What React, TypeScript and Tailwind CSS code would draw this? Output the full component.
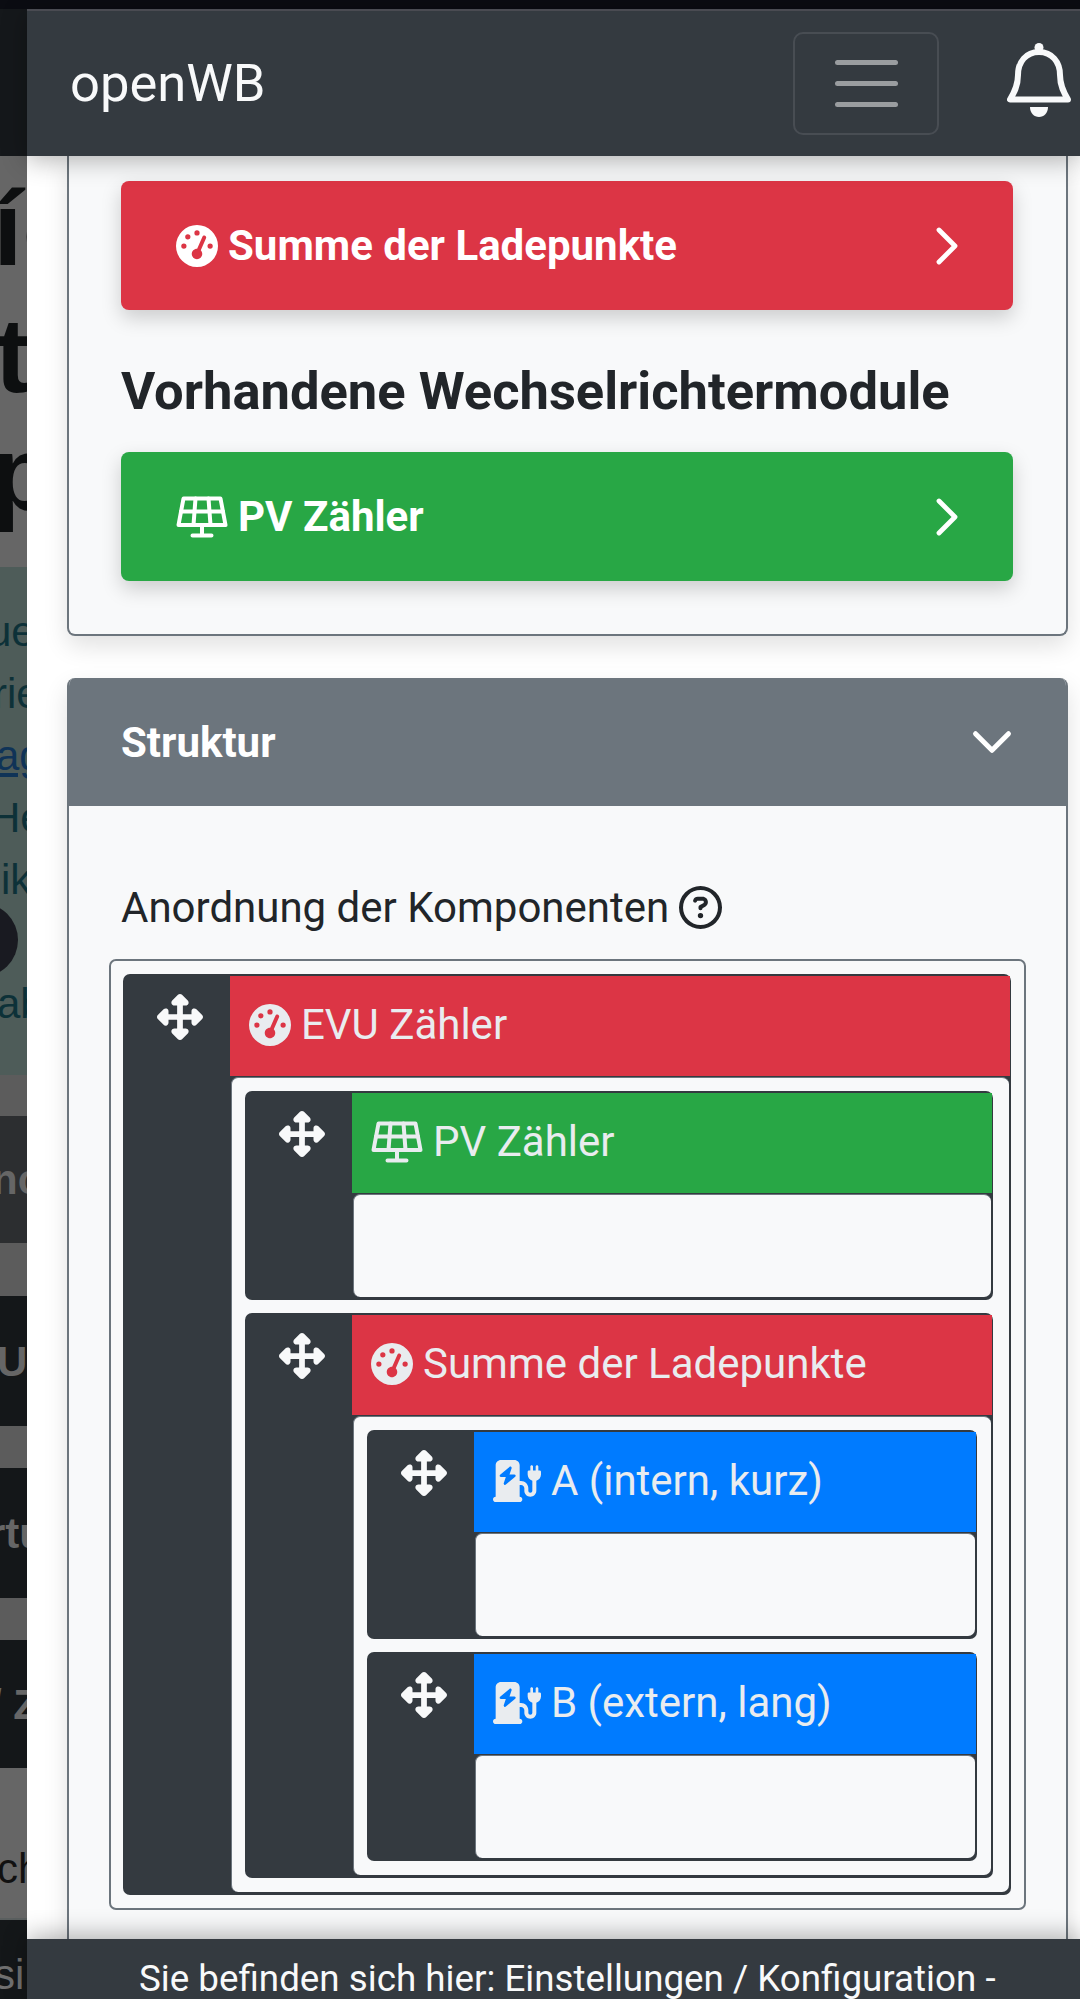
import type { ReactNode } from "react";
import { ChevronDown, ChevronRight } from "lucide-react";
import { FaChargingStation, FaGaugeHigh, FaRegCircleQuestion, FaUpDownLeftRight } from "react-icons/fa6";

function SolarPanel({ className }: { className?: string }) {
  return (
    <svg viewBox="0 0 51 42" className={className} fill="none" stroke="currentColor" strokeWidth="4" strokeLinejoin="round" strokeLinecap="round">
      <path d="M7 2.5H44L49 29H2Z" />
      <path d="M4.5 15.5H46.5M19 2.5L17 29M32 2.5L34 29M25.5 29V38M16 39.5H35" />
    </svg>
  );
}

function BellOutline({ className }: { className?: string }) {
  return (
    <svg viewBox="0 0 65 74" className={className}>
      <circle cx="32" cy="4.5" r="4.5" fill="currentColor" />
      <path
        d="M32 9C19 9 11 19 11 32C11 43 7 50 3 56.5H61C57 50 53 43 53 32C53 19 45 9 32 9Z"
        fill="none"
        stroke="currentColor"
        strokeWidth="6"
        strokeLinejoin="round"
      />
      <path d="M23 64H41C41 70 37 74 32 74C27 74 23 70 23 64Z" fill="currentColor" />
    </svg>
  );
}

type Node = {
  label: string;
  icon: ReactNode;
  head: string;
  items?: Node[];
};

const gauge = <FaGaugeHigh className="w-[42px] h-[42px] shrink-0" />;
const solar = <SolarPanel className="w-[52px] h-[42px] shrink-0" />;
const station = <FaChargingStation preserveAspectRatio="none" className="w-[48px] h-[42px] shrink-0" />;

const tree: Node = {
  label: "EVU Zähler",
  icon: gauge,
  head: "bg-[#dc3545]",
  items: [
    { label: "PV Zähler", icon: solar, head: "bg-[#28a745]" },
    {
      label: "Summe der Ladepunkte",
      icon: gauge,
      head: "bg-[#dc3545]",
      items: [
        { label: "A (intern, kurz)", icon: station, head: "bg-[#007bff]" },
        { label: "B (extern, lang)", icon: station, head: "bg-[#007bff]" },
      ],
    },
  ],
};

function TreeItem({ node, outer }: { node: Node; outer?: boolean }) {
  return (
    <div className="flex rounded-[7px] bg-[#343a40] pt-[2px] pb-[3px] pr-[1px]">
      {/* Drag handle */}
      <div className="w-[107px] shrink-0 pt-[18px] pl-[34px] text-[#f8f9fa]">
        <FaUpDownLeftRight className="w-[46px] h-[46px]" />
      </div>
      <div className="flex-1 min-w-0 flex flex-col">
        <div className={`h-[100px] flex items-center gap-[10px] pl-[19px] pb-[3px] text-[42px] text-[#e9ecef] ${node.head}`}>
          {node.icon}
          <span>{node.label}</span>
        </div>
        <div
          className={`ml-[1px] mr-[1px] mt-[1px] rounded-[7px] border border-[#6c757d] border-r-0 border-b-0 bg-[#f8f9fa] flex flex-col gap-[13px] ${
            node.items ? `pt-[13px] pb-[14px] pl-[13px] ${outer ? "pr-[16px]" : "pr-[14px]"}` : "h-[103px]"
          }`}
        >
          {node.items?.map((item) => (
            <TreeItem key={item.label} node={item} />
          ))}
        </div>
      </div>
    </div>
  );
}

function ModuleButton({ color, icon, label }: { color: string; icon: ReactNode; label: string }) {
  return (
    <button className={`w-full h-[129px] rounded-[8px] flex items-center justify-between pl-[55px] pr-[34px] text-white font-bold text-[42px] shadow-[0_8px_20px_rgba(0,0,0,0.18)] ${color}`}>
      <span className="flex items-center gap-[10px]">
        {icon}
        {label}
      </span>
      <ChevronRight className="w-[64px] h-[64px]" strokeWidth={1.8} />
    </button>
  );
}

// dimmed page behind the drawer, only its right edge is visible
function PeekBand({ className, children }: { className: string; children?: ReactNode }) {
  return <div className={`overflow-hidden flex whitespace-nowrap ${className}`}>{children}</div>;
}

function PeekStrip() {
  const tealRow = "h-[62px] flex items-center text-[42px] text-[#0d3138] whitespace-nowrap";
  return (
    <div className="w-[27px] shrink-0 flex flex-col overflow-hidden font-['Liberation_Sans',sans-serif]">
      <PeekBand className="h-[147px] bg-[#15181b]" />
      <div className="h-[411px] bg-[#666666] overflow-hidden text-[106px] font-bold leading-[125px] text-[#0d0f10] pt-[10px]">
        <div className="h-[127px] -ml-[7px] whitespace-nowrap">íe</div>
        <div className="h-[118px] -ml-[5px] whitespace-nowrap">tt</div>
        <div className="-ml-[9px] whitespace-nowrap">pp</div>
      </div>
      <div className="h-[508px] bg-[#4e5c59] overflow-hidden pt-[33px] relative">
        <div className={`${tealRow} -ml-[12px]`}>ue</div>
        <div className={`${tealRow} -ml-[7px]`}>rie</div>
        <div className={`${tealRow} -ml-[4px] text-[#0f3357] underline`}>ag</div>
        <div className={`${tealRow} -ml-[10px]`}>He</div>
        <div className={`${tealRow} ml-[1px]`}>ik</div>
        <div className={tealRow} />
        <div className={`${tealRow} -ml-[3px]`}>ab</div>
        <div className="absolute left-[-56px] top-[336px] w-[74px] h-[74px] rounded-full bg-[#191a21]" />
      </div>
      <PeekBand className="h-[41px] bg-[#5c5c5c]" />
      <PeekBand className="h-[127px] bg-[#2c2e30] items-center text-[42px] font-bold text-[#666666]"><span className="-ml-[8px]">nc</span></PeekBand>
      <PeekBand className="h-[53px] bg-[#5c5c5c]" />
      <PeekBand className="h-[130px] bg-[#141719] items-center text-[42px] font-bold text-[#666666]"><span className="-ml-[3px]">U</span></PeekBand>
      <PeekBand className="h-[42px] bg-[#5c5c5c]" />
      <PeekBand className="h-[130px] bg-[#141719] items-center text-[42px] font-bold text-[#666666]"><span className="-ml-[11px]">rtu</span></PeekBand>
      <PeekBand className="h-[42px] bg-[#5c5c5c]" />
      <PeekBand className="h-[128px] bg-[#141719] items-center text-[42px] font-bold text-[#666666]"><span className="-ml-[10px]">/ Z</span></PeekBand>
      <PeekBand className="h-[152px] bg-[#666666] items-center text-[42px] text-[#111111] border-b-2 border-[#5a5f5f] pt-[50px]"><span className="-ml-[3px]">ch</span></PeekBand>
      <PeekBand className="flex-1 bg-[#141719] items-center text-[42px] text-[#707070] pt-[30px]"><span className="-ml-[6px]">si</span></PeekBand>
    </div>
  );
}

export default function App() {
  return (
    <div className="w-[1080px] h-[1999px] overflow-hidden flex flex-col bg-[#0b0c12] font-['Roboto',sans-serif] text-[#212529]">
      <div className="h-[9px] shrink-0 bg-[#0b0c12]" />
      <div className="flex-1 min-h-0 flex">
        <PeekStrip />

        <div className="flex-1 min-w-0 flex flex-col bg-white">
          {/* Navbar */}
          <header className="relative z-10 h-[147px] shrink-0 flex items-center bg-[#343a40] border-t-2 border-[#4a4b52] pl-[43px] shadow-[0_4px_24px_rgba(0,0,0,0.3)]">
            <span className="text-[52.5px] text-[#f8f9fa]">openWB</span>
            <button className="ml-auto w-[146px] h-[103px] rounded-[10px] border-2 border-[#484d53] flex flex-col items-center justify-center gap-[16px]">
              <span className="block w-[63px] h-[5px] rounded-full bg-[#9a9da0]" />
              <span className="block w-[63px] h-[5px] rounded-full bg-[#9a9da0]" />
              <span className="block w-[63px] h-[5px] rounded-full bg-[#9a9da0]" />
            </button>
            <BellOutline className="ml-[68px] mr-[8px] mb-[8px] w-[65px] h-[74px] text-[#f8f9fa]" />
          </header>

          {/* Settings content */}
          <main className="flex-1 min-h-0 overflow-hidden flex flex-col gap-[42px] pl-[40px] pr-[12px]">
            <section className="shrink-0 h-[480px] rounded-b-[8px] border-2 border-t-0 border-[#6c757d] bg-[#f8f9fa] pl-[52px] pr-[53px] pt-[25px] shadow-[0_10px_24px_rgba(0,0,0,0.12)]">
              <ModuleButton color="bg-[#dc3545]" icon={gauge} label="Summe der Ladepunkte" />
              <h3 className="h-[142px] flex items-center pt-[20px] text-[52.5px] font-bold text-[#212529]">Vorhandene Wechselrichtermodule</h3>
              <ModuleButton color="bg-[#28a745]" icon={solar} label="PV Zähler" />
            </section>

            <section className="shrink-0 rounded-[8px] border-x-2 border-[#6c757d] bg-[#f8f9fa] shadow-[0_10px_24px_rgba(0,0,0,0.12)] overflow-hidden">
              <div className="-mx-[2px] h-[128px] flex items-center justify-between bg-[#6c757d] pl-[54px] pr-[43px] text-white">
                <span className="text-[42px] font-bold">Struktur</span>
                <ChevronDown className="w-[66px] h-[66px]" strokeWidth={1.8} />
              </div>
              <div className="px-[40px] pb-[40px] pt-[78px]">
                <div className="flex items-center gap-[10px] ml-[12px] h-[46px] text-[42px]">
                  <span>Anordnung der Komponenten</span>
                  <FaRegCircleQuestion className="w-[43px] h-[43px]" />
                </div>
                <div className="mt-[29px] rounded-[7px] border-2 border-[#6c757d] pt-[13px] pb-[13px] pl-[12px] pr-[13px]">
                  <TreeItem node={tree} outer />
                </div>
              </div>
            </section>
          </main>

          {/* Breadcrumb footer */}
          <footer className="relative z-10 h-[60px] shrink-0 overflow-hidden bg-[#343a40] pt-[17px] pl-[112px] text-[36.75px] leading-[46px] text-[#f8f9fa] whitespace-nowrap shadow-[0_-4px_24px_rgba(0,0,0,0.3)]">
            Sie befinden sich hier: Einstellungen / Konfiguration -
          </footer>
        </div>
      </div>
    </div>
  );
}
